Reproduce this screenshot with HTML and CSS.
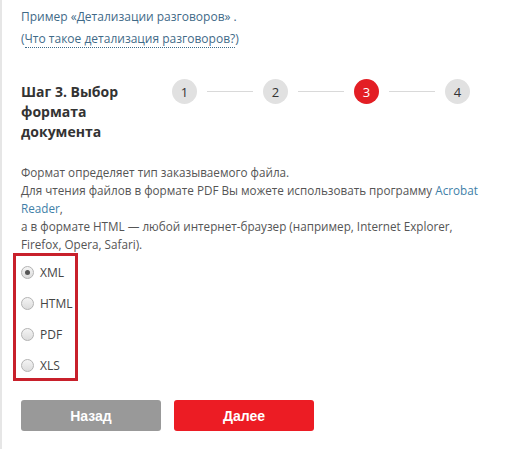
FILE: index.html
```html
<!DOCTYPE html>
<html lang="ru">
<head>
<meta charset="utf-8">
<link rel="stylesheet" href="styles.css">
</head>
<body>
<div class="page">
  <p class="intro">Пример «Детализации разговоров» .</p>
  <p class="intro q">(<a class="dotted" href="#">Что такое детализация разговоров?</a>)</p>

  <div class="step">
    <h2 class="step-title">Шаг 3. Выбор формата документа</h2>
    <div class="steps">
      <span class="dot">1</span><span class="line"></span>
      <span class="dot">2</span><span class="line"></span>
      <span class="dot active">3</span><span class="line"></span>
      <span class="dot">4</span>
    </div>
  </div>

  <p class="desc">Формат определяет тип заказываемого файла.<br>
  Для чтения файлов в формате PDF Вы можете использовать программу <a href="#">Acrobat Reader</a>,<br>
  а в формате HTML — любой интернет-браузер (например, Internet Explorer, Firefox, Opera, Safari).</p>

  <div class="options">
    <label class="opt"><span class="radio checked"></span>XML</label>
    <label class="opt"><span class="radio"></span>HTML</label>
    <label class="opt"><span class="radio"></span>PDF</label>
    <label class="opt"><span class="radio"></span>XLS</label>
  </div>

  <div class="buttons">
    <button class="btn back">Назад</button>
    <button class="btn next">Далее</button>
  </div>
</div>
</body>
</html>
```
FILE: styles.css
```css
html, body { margin: 0; padding: 0; background: #fff; }
body {
  font-family: "Open Sans", "Noto Sans", sans-serif;
  font-size: 11.7px;
  color: #555;
  width: 509px;
  height: 449px;
  overflow: hidden;
}
.page {
  border-left: 2px solid #e6e6e6;
  padding: 6px 0 0 19px;
  height: 449px;
  box-sizing: border-box;
}
.intro {
  margin: 0;
  font-size: 12px;
  line-height: 22px;
  color: #3f6a88;
}
.q a { color: #3f6a88; text-decoration: none; border-bottom: 1px dotted #3f6a88; }
.step {
  display: flex;
  margin-top: 32px;
}
.step-title {
  margin: 0;
  width: 140px;
  font-size: 14px;
  font-weight: 700;
  line-height: 20px;
  color: #333;
}
.steps {
  display: flex;
  align-items: center;
  height: 25px;
  margin-top: -3px;
  margin-left: 11px;
}
.dot {
  width: 25px;
  height: 25px;
  border-radius: 50%;
  background: #e1e1e1;
  color: #333;
  font-size: 13px;
  display: flex;
  align-items: center;
  justify-content: center;
  flex: none;
}
.dot.active { background: #e31e24; color: #fff; }
.line {
  width: 46px;
  height: 1px;
  background: #d9d9d9;
  margin: 0 10px;
}
.desc {
  margin: 21px 0 0;
  line-height: 18px;
  width: 470px;
}
.desc a { color: #3f7fa8; text-decoration: none; }
.options {
  margin: 0 0 0 -8px;
  width: 54px;
  border: 3px solid #c8202b;
  padding: 7px 0 4px 5px;
  display: flex;
  flex-direction: column;
  gap: 13px;
}
.opt {
  display: flex;
  align-items: center;
  gap: 6px;
  height: 18px;
  font-size: 12px;
  color: #444;
}
.radio {
  width: 11px;
  height: 11px;
  border-radius: 50%;
  border: 1px solid #b3b3b3;
  background: linear-gradient(#f4f4f4, #dcdcdc);
  position: relative;
  flex: none;
}
.radio.checked::after {
  content: "";
  position: absolute;
  left: 3px; top: 3px;
  width: 5px; height: 5px;
  border-radius: 50%;
  background: #555;
}
.buttons {
  display: flex;
  gap: 13px;
  margin-top: 19px;
}
.btn {
  width: 140px;
  height: 31px;
  border: none;
  border-radius: 3px;
  color: #fff;
  font-family: "Liberation Sans", Arial, sans-serif;
  font-weight: 700;
  font-size: 14px;
}
.btn.back { background: #999; }
.btn.next { background: #ec1c24; }
```
